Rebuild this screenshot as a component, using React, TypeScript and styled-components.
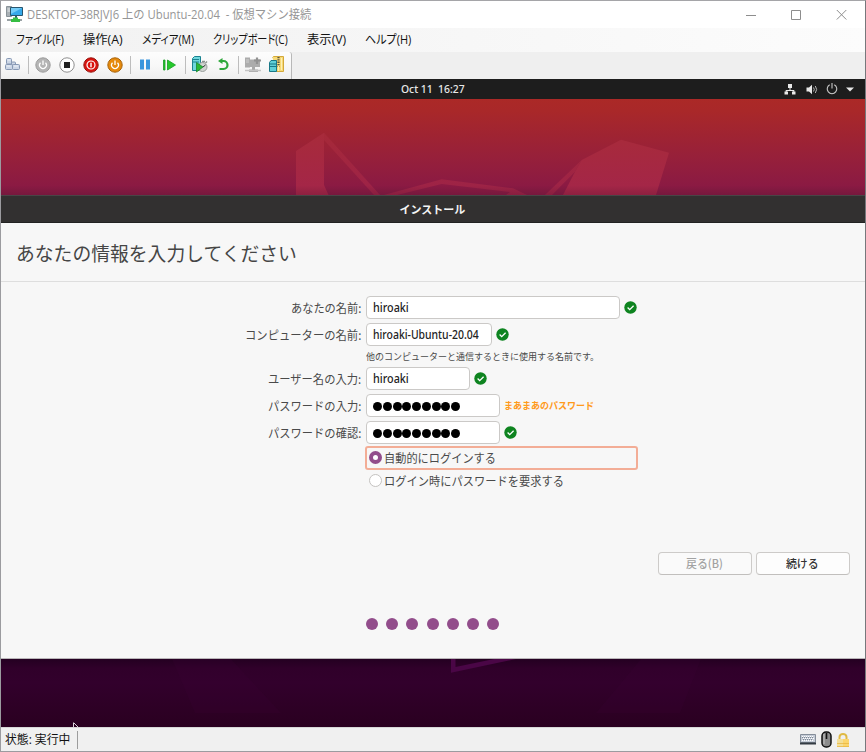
import React, { useLayoutEffect, useRef, useState } from "react";
import styled, { createGlobalStyle } from "styled-components";

const GlobalStyle = createGlobalStyle`
  * { box-sizing: border-box; }
  body { margin: 0; overflow: hidden; font-family: "Noto Sans", "Noto Sans CJK JP", sans-serif; }
  svg { display: block; flex: none; }
`;

/* ---------- text that keeps a given width whatever the installed font ---------- */

const FitBox = styled.span<{ $w: number }>`
  display: block;
  flex: none;
  width: ${(p) => p.$w}px;
  white-space: pre;
`;
const FitInner = styled.span`
  display: inline-block;
  transform-origin: 0 50%;
`;

function Fit({ w, children }: { w: number; children: string }) {
  const ref = useRef<HTMLSpanElement>(null);
  const [scale, setScale] = useState(1);
  useLayoutEffect(() => {
    if (ref.current) setScale(w / ref.current.offsetWidth);
  }, [w]);
  return (
    <FitBox $w={w}>
      <FitInner ref={ref} style={{ transform: `scaleX(${scale})` }}>
        {children}
      </FitInner>
    </FitBox>
  );
}

/* ---------- outer window ---------- */

const Window = styled.div`
  width: 866px;
  height: 752px;
  display: flex;
  flex-direction: column;
  background: #efefef;
  border: 1px solid #9b9b9f;
  border-top-color: #a5a5a8;
  border-right-color: #77787c;
`;

const TitleBar = styled.header`
  height: 27px;
  flex: none;
  display: flex;
  align-items: center;
  padding-left: 5px;
  background: #fff;
  color: #969696;
  font: 12px/26px "Open Sans", "Noto Sans CJK JP", sans-serif;
`;
const TitleText = styled.div`
  margin-left: 4px;
  flex: 1;
`;
const Caption = styled.div`
  display: flex;
  gap: 34px;
  padding-right: 18px;
`;

const MenuBar = styled.nav`
  height: 24px;
  flex: none;
  display: flex;
  gap: 19px;
  padding-left: 15px;
  background: linear-gradient(90deg, #f1f1f1, #f6f6f6 45%, #fcfcfc);
  color: #111;
  font: 12px/23px "Open Sans", "Noto Sans CJK JP", sans-serif;
  font-feature-settings: "palt";
`;

const ToolBar = styled.div`
  height: 27px;
  flex: none;
  display: flex;
`;
const ToolStrip = styled.div`
  width: 291px;
  display: flex;
  align-items: center;
  padding: 0 0 2px 4px;
  background: linear-gradient(#fdfdfd, #f8f8f8 50%, #eeeeee);
  border-right: 1px solid #b8b8b8;
  border-radius: 0 3px 0 0;
`;
const Tool = styled.div<{ $ml?: number }>`
  margin-left: ${(p) => p.$ml ?? 0}px;
`;
const Separator = styled.i<{ $ml?: number }>`
  width: 1px;
  height: 18px;
  margin-left: ${(p) => p.$ml ?? 0}px;
  background: #bdbdbd;
`;

const StatusBar = styled.footer`
  height: 24px;
  flex: none;
  display: flex;
  align-items: center;
  border-top: 1px solid #d7d7d7;
  padding: 0 16px 0 4px;
  background: #f0f0f0;
  color: #111;
  font: 12px/22px "Open Sans", "Noto Sans CJK JP", sans-serif;
`;
const StatusDivider = styled.i`
  width: 1px;
  height: 18px;
  margin-left: 7px;
  background: #9c9c9c;
`;
const StatusIcons = styled.div`
  display: flex;
  align-items: center;
  margin-left: auto;
  gap: 5px;
`;

/* ---------- guest desktop ---------- */

const Desktop = styled.main`
  height: 648px;
  flex: none;
  display: flex;
  flex-direction: column;
  background: #2c0022;
`;
const TopPanel = styled.div`
  height: 20px;
  flex: none;
  display: grid;
  grid-template-columns: 400px 1fr auto;
  align-items: center;
  padding-right: 11px;
  background: #1d1d1d;
  color: #e8e8e8;
  font: 500 11px/20px "Noto Sans", sans-serif;
`;
const Clock = styled.div`
  grid-column: 2;
`;
const Tray = styled.div`
  display: flex;
  align-items: center;
  gap: 8px;
`;
const WallTop = styled.div`
  height: 96px;
  flex: none;
  background: linear-gradient(#ab2927 0, #a92829 12%, #97203a 60%, #8b1a43 90%, #76183d 100%);
`;
const WallBottom = styled.div`
  flex: 1;
  background: linear-gradient(#240021 0, #30002a 14%, #32002c 35%, #2a0020 100%);
`;

const Installer = styled.section`
  height: 464px;
  flex: none;
  display: flex;
  flex-direction: column;
  background: #f7f7f7;
  border-bottom: 1px solid #b9b5b8;
`;
const InstallerTitle = styled.div`
  height: 28px;
  flex: none;
  display: flex;
  justify-content: center;
  padding-right: 1px;
  background: #323030;
  border-top: 1px solid #484546;
  border-bottom: 1px solid #222;
  color: #f4f4f4;
  font: 700 11px/27px "Noto Sans CJK JP", sans-serif;
`;
const Heading = styled.h1`
  height: 59px;
  flex: none;
  margin: 0;
  padding-left: 15px;
  border-bottom: 1px solid #dedede;
  color: #454545;
  font: 400 19px/59px "Noto Sans CJK JP", sans-serif;
`;

const Form = styled.div`
  display: grid;
  grid-template-columns: 360px 1fr;
  grid-template-rows: 23px 23px 13px 23px 23px 23px;
  row-gap: 4px;
  column-gap: 5px;
  padding-top: 14px;
  color: #4a4a4a;
  font: 400 12px/23px "Noto Sans CJK JP", sans-serif;
`;
const Label = styled.label`
  grid-column: 1;
  justify-self: end;
  height: 23px;
`;
const Field = styled.div`
  grid-column: 2;
  display: flex;
  align-items: center;
`;
const Input = styled.div<{ $w: number }>`
  width: ${(p) => p.$w}px;
  height: 23px;
  display: flex;
  align-items: center;
  padding-left: 6px;
  border: 1px solid #cbc9c7;
  border-radius: 4px;
  background: #fff;
  color: #222;
  font: 500 12px/20px "Noto Sans", sans-serif;
`;
const PasswordDots = styled.div`
  display: flex;
  gap: 0.75px;
  padding-top: 2px;
`;
const PasswordDot = styled.i`
  width: 9px;
  height: 9px;
  border-radius: 50%;
  background: #000;
`;
const Status = styled.div`
  margin-left: 4px;
`;
const Strength = styled.div`
  margin-left: 4px;
  color: #ff9a1c;
  font-size: 9.5px;
  font-weight: 700;
`;
const Hint = styled.div`
  grid-column: 2;
  font-size: 9.5px;
  line-height: 13px;
`;

const Radios = styled.div`
  width: 273px;
  margin: 2px 0 0 364px;
  color: #4a4a4a;
  font: 400 12px/20px "Noto Sans CJK JP", sans-serif;
`;
const RadioRow = styled.div<{ $focus?: boolean }>`
  height: ${(p) => (p.$focus ? 24 : 22)}px;
  display: flex;
  align-items: center;
  gap: 2px;
  padding-left: 2px;
  border: 2px solid ${(p) => (p.$focus ? "#f3ad96" : "transparent")};
  border-radius: 3px;
`;
const RadioMark = styled.i<{ $on?: boolean }>`
  width: 13px;
  height: 13px;
  flex: none;
  margin-bottom: 1px;
  border-radius: 50%;
  border: ${(p) => (p.$on ? "4px solid #924d8b" : "1px solid #c4c2c0")};
  background: #fff;
`;

const Buttons = styled.div`
  display: flex;
  justify-content: flex-end;
  gap: 4px;
  margin-top: 60px;
  padding-right: 15px;
`;
const Button = styled.button<{ $muted?: boolean }>`
  width: 94px;
  height: 23px;
  display: flex;
  justify-content: center;
  padding: 0 1px 0 0;
  border: 1px solid #cdcbc9;
  border-bottom-color: #c1bfbd;
  border-radius: 4px;
  background: ${(p) => (p.$muted ? "#fafafa" : "#fdfdfd")};
  color: ${(p) => (p.$muted ? "#a2a2a2" : "#333")};
  font: 500 11.5px/21px "Noto Sans CJK JP", sans-serif;
`;
const Steps = styled.div`
  display: flex;
  gap: 8.2px;
  margin: 43px 0 0 365px;
`;
const Step = styled.i`
  width: 12px;
  height: 12px;
  border-radius: 50%;
  background: #924d8b;
`;

/* ---------- icons ---------- */

const Ok = () => (
  <svg width="13" height="13" viewBox="0 0 13 13">
    <circle cx="6.5" cy="6.5" r="6.2" fill="#0e8420" />
    <path d="M3.6 6.5l2.1 2.1 3.9-3.9" fill="none" stroke="#fff" strokeWidth="1.3" />
  </svg>
);

const AppIcon = () => (
  <svg width="17" height="17" viewBox="0 0 17 17">
    <path d="M.5.5h5v10h-5z" fill="#a9b0b5" stroke="#8a9399" />
    <path d="M1.500 3h3M1.500 5h3" stroke="#e8ecee" />
    <path d="M4.500 1.500h12v8h-12z" fill="#36a9ea" stroke="#28566f" />
    <path d="M5 2h11L5 8z" fill="#74cdf8" />
    <path d="M9 10h2v3H9z" fill="#2b6170" />
    <path d="M1 14h15" stroke="#9aa2a5" strokeWidth="2" />
    <path d="M7 11.500h5v1.500h2v3H5v-3h2z" fill="#36bd43" />
  </svg>
);
const Minimize = () => (
  <svg width="11" height="11" viewBox="0 0 11 11"><path d="M0 6.5h10" stroke="#8d8d8d" /></svg>
);
const Maximize = () => (
  <svg width="11" height="11" viewBox="0 0 11 11"><path d="M.5 1.5h9v9h-9z" fill="none" stroke="#8d8d8d" /></svg>
);
const Close = () => (
  <svg width="11" height="11" viewBox="0 0 11 11"><path d="M.8 1l9.500 9.500M10.300 1L.8 10.500" stroke="#8d8d8d" /></svg>
);

const CtrlAltDel = () => (
  <svg width="16" height="14" viewBox="0 0 16 14">
    <g fill="#ccd6e6" stroke="#8798b4">
      <rect x="1.500" y=".5" width="5" height="5.500" rx="1" />
      <rect x=".5" y="6.500" width="7" height="5" rx="1" />
      <rect x="6.500" y="4" width="4" height="3" rx="1" />
      <rect x="7.500" y="6.500" width="7" height="5" rx="1" />
    </g>
    <path d="M2.500 2h3M1.500 8h4M9 8h4" stroke="#eef3f9" />
  </svg>
);
const RoundPower = ({ fill, edge }: { fill: string; edge: string }) => (
  <svg width="16" height="16" viewBox="0 0 16 16">
    <circle cx="8" cy="8" r="7.2" fill={fill} stroke={edge} />
    <path d="M5.500 5.700a3.400 3.400 0 1 0 5 0M8 3.500v4.500" fill="none" stroke="#fff" strokeWidth="1.300" />
  </svg>
);
const StopIcon = () => (
  <svg width="16" height="16" viewBox="0 0 16 16">
    <circle cx="8" cy="8" r="7.200" fill="#fff" stroke="#8e8e8e" />
    <path d="M5 5h6v6H5z" fill="#222" />
  </svg>
);
const ShutDown = () => (
  <svg width="16" height="16" viewBox="0 0 16 16">
    <circle cx="8" cy="8" r="7.200" fill="#d9130f" stroke="#97150f" />
    <circle cx="8" cy="8" r="4" fill="none" stroke="#fff" strokeWidth="1.200" />
    <path d="M8 5.800v4.400" stroke="#fff" strokeWidth="1.400" />
  </svg>
);
const PauseIcon = () => (
  <svg width="10" height="11" viewBox="0 0 10 11">
    <path d="M0 .5h4v10H0zM6 .5h4v10H6z" fill="#3a96dd" />
  </svg>
);
const ResumeIcon = () => (
  <svg width="14" height="12" viewBox="0 0 14 12">
    <path d="M.5 1h1.500v10H.5zM4.500 1L12.500 6l-8 5z" fill="#25c92b" stroke="#159d22" strokeWidth=".8" />
  </svg>
);
const Checkpoint = () => (
  <svg width="16" height="17" viewBox="0 0 16 17">
    <path d="M.5 2.500L2.500.5h6v14h-8z" fill="#6fd7dd" stroke="#1b8391" />
    <path d="M1 3.500h6M1 6h6" stroke="#1b8391" />
    <circle cx="10.500" cy="11" r="4.500" fill="#d0d3d1" stroke="#9aa09d" />
    <path d="M10 5.500h3M13.500 7l1.500-1.500" stroke="#8b928e" strokeWidth="1.500" />
    <path d="M4.500 6.500L11 11l-6.500 5z" fill="#29ba35" stroke="#148022" strokeWidth=".7" />
    <path d="M11 11l2.500-2" stroke="#333" />
  </svg>
);
const Revert = () => (
  <svg width="11" height="13" viewBox="0 0 11 13">
    <path d="M2 3h3.500a3.500 3.500 0 0 1 0 8H1.500" fill="none" stroke="#2da83a" strokeWidth="2.200" />
    <path d="M0 3L4.500 0v6z" fill="#2da83a" />
  </svg>
);
const Enhanced = () => (
  <svg width="17" height="16" viewBox="0 0 17 16">
    <path d="M0 .5h5v10H0zM5 2.500h10V10H5z" fill="#acacac" />
    <path d="M1 3h3M1 5h3" stroke="#d0d0d0" />
    <path d="M12 .5v6.500M9 3.500h7" stroke="#929292" strokeWidth="2.200" />
    <path d="M7 10h3v2.500h3V15H4v-2.500h3z" fill="#a9a9a9" />
    <path d="M0 13.500h16" stroke="#c4c4c4" strokeWidth="1.500" />
  </svg>
);
const Share = () => (
  <svg width="16" height="17" viewBox="0 0 16 17">
    <path d="M3.500 1.500l1-1h10v15H7" fill="#f7da76" stroke="#d3a83a" />
    <path d="M9.500 1v10" stroke="#5c5540" strokeWidth="2.200" strokeDasharray="1.300 1" />
    <path d="M9.500 10v5M12.500 2v12" stroke="#fff0b6" />
    <path d="M.5 6.500l1.500-2h5.500v11h-7z" fill="#5fd0d8" stroke="#197786" />
    <path d="M1 8h6M1 10.500h6" stroke="#197786" />
  </svg>
);

const NetworkIcon = () => (
  <svg width="14" height="11" viewBox="0 0 14 11" fill="#e8e8e8">
    <path d="M4 0h4v4H4zM.5 7.500h3.500v3H.5zM8 7.500h3.500v3H8zM5.500 4h1v2h3.800v1.500H9.300V7H2.700v.5H1.700V6h3.800z" />
  </svg>
);
const VolumeIcon = () => (
  <svg width="12" height="11" viewBox="0 0 12 11">
    <path d="M.5 3.500H3L6 .7v9.600L3 7.500H.5z" fill="#e8e8e8" />
    <path d="M7.500 3.500q1.500 2 0 4M9.300 2q2.700 3.500 0 7" stroke="#b5b5b5" fill="none" />
  </svg>
);
const PowerIcon = () => (
  <svg width="12" height="12" viewBox="0 0 12 12">
    <path d="M3.700 1.700a4.800 4.800 0 1 0 4.600 0M6 0v5.500" fill="none" stroke="#c9c9c9" strokeWidth="1.100" />
  </svg>
);
const CaretIcon = () => (
  <svg width="8" height="5" viewBox="0 0 8 5"><path d="M0 .5h8L4 4.500z" fill="#e8e8e8" /></svg>
);

const KeyboardIcon = () => (
  <svg width="16" height="11" viewBox="0 0 16 11">
    <path d="M.5.5h15v8H.5z" fill="#c5ccd7" stroke="#848d99" />
    <path d="M2 2.500h12M3 4.500h11M2 6.500h12" stroke="#fff" strokeDasharray="1 1" />
    <path d="M2 3.500h12M3 5.500h10" stroke="#7d8794" strokeDasharray="1 1" />
    <path d="M0 9.500h16" stroke="#343b43" strokeWidth="2" />
  </svg>
);
const MouseIcon = () => (
  <svg width="11" height="17" viewBox="0 0 11 17">
    <rect x="1" y="1" width="9" height="15" rx="4" fill="#8c8c8c" stroke="#111" strokeWidth="1.500" />
    <path d="M3 3v10" stroke="#c4c4c4" />
    <path d="M5.500 2v6" stroke="#111" strokeWidth="1.600" />
  </svg>
);
const LockIcon = () => (
  <svg width="12" height="14" viewBox="0 0 12 14">
    <path d="M2.500 6V4a3.500 3 0 0 1 7 0v2" fill="none" stroke="#dfb944" strokeWidth="2" />
    <path d="M0 6h12v8H0z" fill="#fbd56d" />
    <path d="M0 6h6v8H0z" fill="#f3df98" />
    <path d="M0 10.500h12M0 13.500h12" stroke="#e6b33b" strokeWidth=".7" />
  </svg>
);

const WallTopArt = () => (
  <svg width="864" height="96" viewBox="0 0 864 96">
    <defs>
      <linearGradient id="ear" x1="0" y1="33" x2="0" y2="96" gradientUnits="userSpaceOnUse">
        <stop offset="0" stopColor="#a82b3a" />
        <stop offset=".85" stopColor="#a42647" />
        <stop offset="1" stopColor="#8d2040" />
      </linearGradient>
    </defs>
    <g fill="url(#ear)">
      <path d="M295 52l28-18.300V86l4.500 10H295z" />
      <path d="M323 33.700L379 96h-6L323 41z" opacity=".75" />
      <path d="M383 96l57.700-15.700L512 89.300 526 96h-21l4-3-68.300-8L396 96z" opacity=".75" />
      <path d="M544 96l36.700-35L574 72.700 551 96z" opacity=".75" />
      <path d="M580.700 61L620 40.700l48 13L655 96h-93l12-23.300z" />
    </g>
  </svg>
);
const WallBottomArt = () => (
  <svg width="864" height="68" viewBox="0 0 864 68">
    <path d="M171 0h59l50 54h-86zM640 0h60l-21 54h-84z" fill="#3b0037" opacity=".2" />
    <path d="M450 0h4.500v8L493 0h22l-65 13.700z" fill="#4a0646" />
    <path d="M72.500 63.500v5M73 64l4 4" stroke="#d9d0d7" fill="none" />
  </svg>
);

/* ---------- page ---------- */

const menu: [string, number][] = [
  ["ファイル(F)", 48],
  ["操作(A)", 40],
  ["メディア(M)", 52],
  ["クリップボード(C)", 75],
  ["表示(V)", 39],
  ["ヘルプ(H)", 46],
];
const nine = Array.from({ length: 9 }, (_, i) => i);

const Secret = () => (
  <Input $w={134}>
    <PasswordDots>{nine.map((i) => <PasswordDot key={i} />)}</PasswordDots>
  </Input>
);

export default function App() {
  return (
    <>
      <GlobalStyle />
      <Window>
        <TitleBar>
          <AppIcon />
          <TitleText><Fit w={284}>{"DESKTOP-38RJVJ6 上の Ubuntu-20.04  - 仮想マシン接続"}</Fit></TitleText>
          <Caption><Minimize /><Maximize /><Close /></Caption>
        </TitleBar>
        <MenuBar>
          {menu.map(([text, w]) => <Fit key={text} w={w}>{text}</Fit>)}
        </MenuBar>
        <ToolBar>
          <ToolStrip>
            <Tool><CtrlAltDel /></Tool>
            <Separator $ml={7} />
            <Tool $ml={6}><RoundPower fill="#b4b4b4" edge="#9c9c9c" /></Tool>
            <Tool $ml={8}><StopIcon /></Tool>
            <Tool $ml={8}><ShutDown /></Tool>
            <Tool $ml={8}><RoundPower fill="#e68a0c" edge="#a8640c" /></Tool>
            <Separator $ml={7} />
            <Tool $ml={9}><PauseIcon /></Tool>
            <Tool $ml={13}><ResumeIcon /></Tool>
            <Separator $ml={8} />
            <Tool $ml={6}><Checkpoint /></Tool>
            <Tool $ml={10}><Revert /></Tool>
            <Separator $ml={9} />
            <Tool $ml={6}><Enhanced /></Tool>
            <Tool $ml={7}><Share /></Tool>
          </ToolStrip>
        </ToolBar>
        <Desktop>
          <TopPanel>
            <Clock><Fit w={64}>{"Oct 11  16:27"}</Fit></Clock>
            <Tray><NetworkIcon /><VolumeIcon /><PowerIcon /><CaretIcon /></Tray>
          </TopPanel>
          <WallTop><WallTopArt /></WallTop>
          <Installer>
            <InstallerTitle><Fit w={66}>インストール</Fit></InstallerTitle>
            <Heading><Fit w={281}>あなたの情報を入力してください</Fit></Heading>
            <Form>
              <Label><Fit w={70}>あなたの名前:</Fit></Label>
              <Field>
                <Input $w={254}><Fit w={36}>hiroaki</Fit></Input>
                <Status><Ok /></Status>
              </Field>
              <Label><Fit w={116}>コンピューターの名前:</Fit></Label>
              <Field>
                <Input $w={126}><Fit w={106}>hiroaki-Ubuntu-20.04</Fit></Input>
                <Status><Ok /></Status>
              </Field>
              <Hint><Fit w={233}>他のコンピューターと通信するときに使用する名前です。</Fit></Hint>
              <Label><Fit w={93}>ユーザー名の入力:</Fit></Label>
              <Field>
                <Input $w={104}><Fit w={36}>hiroaki</Fit></Input>
                <Status><Ok /></Status>
              </Field>
              <Label><Fit w={93}>パスワードの入力:</Fit></Label>
              <Field>
                <Secret />
                <Strength><Fit w={90}>まあまあのパスワード</Fit></Strength>
              </Field>
              <Label><Fit w={93}>パスワードの確認:</Fit></Label>
              <Field>
                <Secret />
                <Status><Ok /></Status>
              </Field>
            </Form>
            <Radios>
              <RadioRow $focus><RadioMark $on /><Fit w={112}>自動的にログインする</Fit></RadioRow>
              <RadioRow><RadioMark /><Fit w={180}>ログイン時にパスワードを要求する</Fit></RadioRow>
            </Radios>
            <Buttons>
              <Button $muted><Fit w={37}>戻る(B)</Fit></Button>
              <Button><Fit w={33}>続ける</Fit></Button>
            </Buttons>
            <Steps>{nine.slice(0, 7).map((i) => <Step key={i} />)}</Steps>
          </Installer>
          <WallBottom><WallBottomArt /></WallBottom>
        </Desktop>
        <StatusBar>
          <Fit w={65}>状態: 実行中</Fit>
          <StatusDivider />
          <StatusIcons><KeyboardIcon /><MouseIcon /><LockIcon /></StatusIcons>
        </StatusBar>
      </Window>
    </>
  );
}
